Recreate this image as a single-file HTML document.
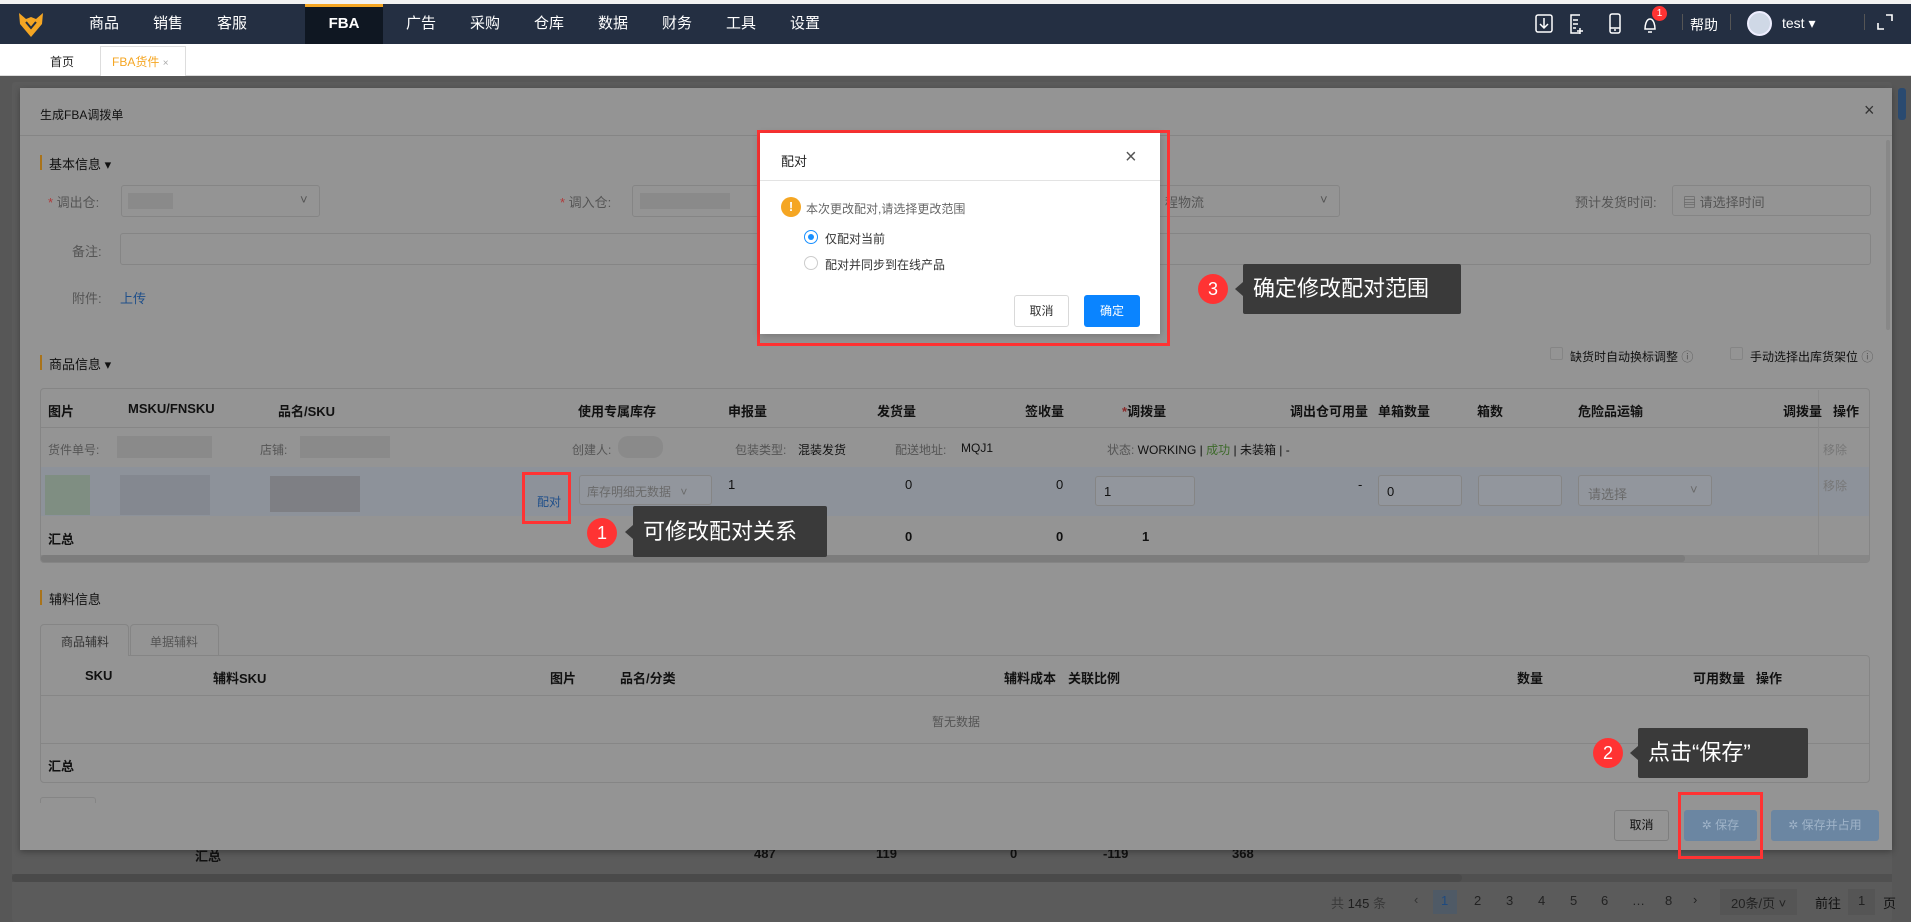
<!DOCTYPE html>
<html><head><meta charset="utf-8"><style>
*{margin:0;padding:0;box-sizing:border-box}
body{width:1911px;height:922px;overflow:hidden;position:relative;background:#575757;font-family:"Liberation Sans","Noto Sans CJK SC",sans-serif;font-size:13px;color:#111}
.a{position:absolute;white-space:nowrap}
.nav{left:0;top:4px;width:1911px;height:40px;background:#242f42}
.ni{top:4px;height:40px;line-height:40px;color:#fff;font-size:15px;width:64px;text-align:center}
.inp{position:absolute;border:1px solid #858585;border-radius:3px;background:#949494}
.th{font-weight:bold;color:#111}
.g{color:#555}
.red{position:absolute;border:3px solid #f33}
.tip{position:absolute;background:#3a3a3a;color:#fff;font-size:22px;border-radius:2px;padding-left:10px}
.cir{position:absolute;width:30px;height:30px;border-radius:50%;background:#f33;color:#fff;text-align:center;line-height:30px;font-size:18px}
.tri{position:absolute;width:0;height:0;border-top:7px solid transparent;border-bottom:7px solid transparent;border-right:8px solid #3a3a3a}
</style></head><body>
<div class="a" style="left:0;top:0;width:1911px;height:4px;background:#f2f2f2"></div>
<div class="a nav"></div>
<svg class="a" style="left:16px;top:10px" width="30" height="30" viewBox="0 0 30 30"><path d="M3 3 L10 9 L15 7 L20 9 L27 3 L26 14 L15 27 L4 14 Z" fill="#f5a623"/><path d="M10 12 L15 18 L20 12" fill="none" stroke="#242f42" stroke-width="2"/></svg>
<div class="a" style="left:305px;top:4px;width:78px;height:40px;background:#0f1722;border-top:3px solid #f5a623"></div>
<div class="a ni" style="left:72px">商品</div><div class="a ni" style="left:136px">销售</div><div class="a ni" style="left:200px">客服</div>
<div class="a ni" style="left:312px;font-weight:bold">FBA</div>
<div class="a ni" style="left:389px">广告</div><div class="a ni" style="left:453px">采购</div><div class="a ni" style="left:517px">仓库</div><div class="a ni" style="left:581px">数据</div><div class="a ni" style="left:645px">财务</div><div class="a ni" style="left:709px">工具</div><div class="a ni" style="left:773px">设置</div>
<svg class="a" style="left:1534px;top:12px" width="130" height="24" viewBox="0 0 130 24" fill="none" stroke="#fff" stroke-width="1.5"><rect x="2" y="3" width="16" height="17" rx="2"/><path d="M10 6v10M6 12l4 4 4-4"/><path d="M46 3h-9v18h9M39 8h5M39 12h5M39 16h3M46 16v6M43 19h6"/><rect x="76" y="2" width="10" height="19" rx="2"/><path d="M76 16h10M80 18h2"/><path d="M111 17c0-3 1-10 5-10s5 7 5 10h-10zM114 20h4"/></svg>
<div class="a" style="left:1652px;top:6px;width:15px;height:15px;border-radius:50%;background:#f33;color:#fff;font-size:10px;text-align:center;line-height:15px">1</div>
<div class="a" style="left:1682px;top:14px;height:16px;border-left:1px solid #555"></div>
<div class="a" style="left:1690px;top:15px;color:#fff;font-size:14px">帮助</div>
<div class="a" style="left:1730px;top:14px;height:16px;border-left:1px solid #555"></div>
<div class="a" style="left:1747px;top:11px;width:25px;height:25px;border-radius:50%;background:#cfd8e6;border:2px solid #eef"></div>
<div class="a" style="left:1782px;top:15px;color:#fff;font-size:14px">test ▾</div>
<div class="a" style="left:1864px;top:14px;height:16px;border-left:1px solid #555"></div>
<svg class="a" style="left:1876px;top:13px" width="18" height="18" fill="none" stroke="#fff" stroke-width="1.6"><path d="M10 2h6v6M2 10v6h6"/></svg>
<!-- tab bar -->
<div class="a" style="left:0;top:44px;width:1911px;height:32px;background:#fff;border-bottom:1px solid #ddd"></div>
<div class="a" style="left:50px;top:53px;font-size:12px;color:#222">首页</div>
<div class="a" style="left:100px;top:46px;width:86px;height:30px;border:1px solid #ddd;border-bottom:none;background:#fff"></div>
<div class="a" style="left:112px;top:53px;font-size:12px;color:#f5a623">FBA货件 <span style="color:#aaa;font-size:10px">×</span></div>
<!-- background page -->
<div class="a" style="left:12px;top:82px;width:1880px;height:840px;background:#5b5b5b;border-radius:3px"></div>
<div class="a" style="left:1898px;top:88px;width:8px;height:32px;background:#2a4a70;border-radius:3px"></div>
<div class="a" style="left:195px;top:846px;font-weight:bold">汇总</div>
<div class="a" style="left:754px;top:846px;font-weight:bold">487</div><div class="a" style="left:876px;top:846px;font-weight:bold">119</div><div class="a" style="left:1010px;top:846px;font-weight:bold">0</div><div class="a" style="left:1103px;top:846px;font-weight:bold">-119</div><div class="a" style="left:1232px;top:846px;font-weight:bold">368</div>
<div class="a" style="left:12px;top:874px;width:1880px;height:8px;background:#505050"></div>
<div class="a" style="left:12px;top:874px;width:1450px;height:8px;background:#4a4a4a;border-radius:4px"></div>
<div class="a" style="left:1433px;top:890px;width:24px;height:24px;background:#4f5a66"></div>
<div class="a" style="left:1331px;top:893px;font-size:13px;color:#1e1e1e"><span style="color:#3a3a3a">共</span> 145 <span style="color:#3a3a3a">条</span></div>
<div class="a" style="left:1414px;top:892px;color:#333">‹</div>
<div class="a" style="left:1441px;top:893px;color:#1e4a80">1</div>
<div class="a" style="left:1474px;top:893px;color:#222">2</div><div class="a" style="left:1506px;top:893px;color:#222">3</div><div class="a" style="left:1538px;top:893px;color:#222">4</div><div class="a" style="left:1570px;top:893px;color:#222">5</div><div class="a" style="left:1601px;top:893px;color:#222">6</div><div class="a" style="left:1632px;top:893px;color:#222">…</div><div class="a" style="left:1665px;top:893px;color:#222">8</div><div class="a" style="left:1693px;top:892px;color:#222">›</div>
<div class="a" style="left:1720px;top:889px;width:77px;height:26px;background:#555"></div>
<div class="a" style="left:1731px;top:893px;color:#222">20条/页 ˅</div>
<div class="a" style="left:1815px;top:893px;color:#111">前往</div>
<div class="a" style="left:1848px;top:889px;width:27px;height:26px;background:#555"></div>
<div class="a" style="left:1858px;top:893px;color:#222">1</div><div class="a" style="left:1883px;top:893px;color:#111">页</div>
<!-- modal -->
<div class="a" style="left:20px;top:88px;width:1872px;height:762px;background:#949494;box-shadow:0 2px 6px rgba(0,0,0,.3)"></div>
<div class="a" style="left:1886px;top:140px;width:4px;height:190px;background:#888;border-radius:2px"></div>
<div class="a" style="left:40px;top:106px;font-size:12px">生成FBA调拨单</div>
<div class="a" style="left:1864px;top:100px;font-size:18px;color:#333">×</div>
<div class="a" style="left:20px;top:135px;width:1872px;border-top:1px solid #858585"></div>
<div class="a" style="left:40px;top:155px;height:15px;border-left:2px solid #a9731a"></div>
<div class="a" style="left:49px;top:154px">基本信息 ▾</div>
<div class="a g" style="left:48px;top:192px"><span style="color:#b13a3a">*</span> 调出仓:</div>
<div class="inp" style="left:121px;top:185px;width:199px;height:32px"></div>
<div class="a" style="left:128px;top:193px;width:45px;height:16px;background:#8a8a8a"></div>
<div class="a g" style="left:300px;top:192px">˅</div>
<div class="a g" style="left:560px;top:192px"><span style="color:#b13a3a">*</span> 调入仓:</div>
<div class="inp" style="left:632px;top:185px;width:708px;height:32px"></div>
<div class="a" style="left:640px;top:193px;width:90px;height:16px;background:#8a8a8a"></div>
<div class="a g" style="left:1165px;top:192px">程物流</div><div class="a g" style="left:1320px;top:192px">˅</div>
<div class="a g" style="left:1575px;top:192px">预计发货时间:</div>
<div class="inp" style="left:1672px;top:185px;width:199px;height:31px"></div>
<div class="a g" style="left:1683px;top:192px">▤ 请选择时间</div>
<div class="a g" style="left:72px;top:241px">备注:</div>
<div class="inp" style="left:120px;top:233px;width:1751px;height:32px"></div>
<div class="a g" style="left:72px;top:288px">附件:</div>
<div class="a" style="left:120px;top:288px;color:#1f4f8a">上传</div>
<!-- goods info -->
<div class="a" style="left:40px;top:355px;height:15px;border-left:2px solid #a9731a"></div>
<div class="a" style="left:49px;top:354px">商品信息 ▾</div>
<div class="a" style="left:1550px;top:347px;width:13px;height:13px;border:1px solid #858585;border-radius:2px"></div>
<div class="a" style="left:1570px;top:348px;font-size:12px">缺货时自动换标调整 <span class="g">ⓘ</span></div>
<div class="a" style="left:1730px;top:347px;width:13px;height:13px;border:1px solid #858585;border-radius:2px"></div>
<div class="a" style="left:1750px;top:348px;font-size:12px">手动选择出库货架位 <span class="g">ⓘ</span></div>
<div class="a" style="left:40px;top:388px;width:1830px;height:175px;border:1px solid #858585;border-radius:4px"></div>
<div class="a" style="left:41px;top:427px;width:1828px;border-top:1px solid #868686"></div>
<div class="a" style="left:41px;top:467px;width:1828px;height:49px;background:#8d929a"></div>
<div class="a" style="left:41px;top:555px;width:1828px;height:7px;background:#878787"></div>
<div class="a" style="left:41px;top:555px;width:1644px;height:7px;background:#7c7c7c;border-radius:3px"></div>
<div class="a" style="left:1818px;top:390px;width:1px;height:165px;background:#8a8a8a"></div>
<div class="a th" style="left:48px;top:401px">图片</div><div class="a th" style="left:128px;top:401px">MSKU/FNSKU</div><div class="a th" style="left:278px;top:401px">品名/SKU</div><div class="a th" style="left:578px;top:401px">使用专属库存</div><div class="a th" style="left:728px;top:401px">申报量</div><div class="a th" style="left:877px;top:401px">发货量</div><div class="a th" style="left:1025px;top:401px">签收量</div><div class="a th" style="left:1122px;top:401px"><span style="color:#8a2a2a">*</span>调拨量</div><div class="a th" style="left:1290px;top:401px">调出仓可用量</div><div class="a th" style="left:1378px;top:401px">单箱数量</div><div class="a th" style="left:1477px;top:401px">箱数</div><div class="a th" style="left:1578px;top:401px">危险品运输</div><div class="a th" style="left:1783px;top:401px">调拨量</div><div class="a th" style="left:1833px;top:401px">操作</div>
<div class="a g" style="left:48px;top:441px;font-size:12px">货件单号:</div><div class="a" style="left:117px;top:436px;width:95px;height:22px;background:#8a8a8a"></div>
<div class="a g" style="left:260px;top:441px;font-size:12px">店铺:</div><div class="a" style="left:300px;top:436px;width:90px;height:22px;background:#8a8a8a"></div>
<div class="a g" style="left:572px;top:441px;font-size:12px">创建人:</div><div class="a" style="left:618px;top:436px;width:45px;height:22px;background:#8a8a8a;border-radius:10px"></div>
<div class="a g" style="left:735px;top:441px;font-size:12px">包装类型:</div><div class="a" style="left:798px;top:441px;font-size:12px">混装发货</div>
<div class="a g" style="left:895px;top:441px;font-size:12px">配送地址:</div><div class="a" style="left:961px;top:441px;font-size:12px">MQJ1</div>
<div class="a" style="left:1107px;top:441px;font-size:12px"><span class="g">状态:</span> WORKING | <span style="color:#3d6a2a">成功</span> | 未装箱 | -</div>
<div class="a" style="left:1823px;top:441px;font-size:12px;color:#777">移除</div>
<div class="a" style="left:45px;top:475px;width:45px;height:40px;background:#7f8e82"></div>
<div class="a" style="left:120px;top:475px;width:90px;height:40px;background:#848890"></div>
<div class="a" style="left:270px;top:476px;width:90px;height:36px;background:#7e7f84"></div>
<div class="a" style="left:537px;top:493px;font-size:12px;color:#1f4f8a">配对</div>
<div class="inp" style="left:579px;top:475px;width:133px;height:30px;background:#92969d"></div>
<div class="a" style="left:587px;top:483px;font-size:12px;color:#6a6a6a">库存明细无数据 <span style="margin-left:6px">˅</span></div>
<div class="a" style="left:728px;top:477px">1</div><div class="a" style="left:905px;top:477px">0</div><div class="a" style="left:1056px;top:477px">0</div>
<div class="inp" style="left:1095px;top:476px;width:100px;height:30px;background:#92969d"></div><div class="a" style="left:1104px;top:484px">1</div>
<div class="a" style="left:1358px;top:477px">-</div>
<div class="inp" style="left:1378px;top:475px;width:84px;height:31px;background:#92969d"></div><div class="a" style="left:1387px;top:484px">0</div>
<div class="inp" style="left:1478px;top:475px;width:84px;height:31px;background:#92969d"></div>
<div class="inp" style="left:1578px;top:475px;width:134px;height:31px;background:#92969d"></div><div class="a" style="left:1588px;top:484px;color:#6a6a6a">请选择</div><div class="a" style="left:1690px;top:482px;color:#6a6a6a">˅</div>
<div class="a" style="left:1823px;top:477px;font-size:12px;color:#777">移除</div>
<div class="a th" style="left:48px;top:529px">汇总</div><div class="a th" style="left:905px;top:529px">0</div><div class="a th" style="left:1056px;top:529px">0</div><div class="a th" style="left:1142px;top:529px">1</div>
<!-- 辅料 -->
<div class="a" style="left:40px;top:590px;height:15px;border-left:2px solid #a9731a"></div>
<div class="a" style="left:49px;top:589px">辅料信息</div>
<div class="a" style="left:40px;top:624px;width:89px;height:32px;border:1px solid #858585;border-bottom:none;border-radius:4px 4px 0 0;background:#949494;z-index:2"></div>
<div class="a g" style="left:61px;top:633px;font-size:12px;z-index:3;color:#333">商品辅料</div>
<div class="a" style="left:130px;top:624px;width:89px;height:31px;border:1px solid #858585;border-bottom:none;border-radius:4px 4px 0 0"></div>
<div class="a g" style="left:150px;top:633px;font-size:12px">单据辅料</div>
<div class="a" style="left:40px;top:655px;width:1830px;height:128px;border:1px solid #858585;border-radius:0 4px 4px 4px"></div>
<div class="a" style="left:41px;top:695px;width:1828px;border-top:1px solid #868686"></div>
<div class="a" style="left:41px;top:743px;width:1828px;border-top:1px solid #868686"></div>
<div class="a th" style="left:85px;top:668px">SKU</div><div class="a th" style="left:213px;top:668px">辅料SKU</div><div class="a th" style="left:550px;top:668px">图片</div><div class="a th" style="left:620px;top:668px">品名/分类</div><div class="a th" style="left:1004px;top:668px">辅料成本</div><div class="a th" style="left:1068px;top:668px">关联比例</div><div class="a th" style="left:1517px;top:668px">数量</div><div class="a th" style="left:1693px;top:668px">可用数量</div><div class="a th" style="left:1756px;top:668px">操作</div>
<div class="a g" style="left:932px;top:713px;font-size:12px">暂无数据</div>
<div class="a th" style="left:48px;top:756px">汇总</div>
<div class="a" style="left:40px;top:797px;width:56px;height:6px;border:1px solid #858585;border-bottom:none;border-radius:3px 3px 0 0"></div>
<!-- footer buttons -->
<div class="a" style="left:1614px;top:810px;width:55px;height:31px;border:1px solid #7e7e7e;border-radius:3px;text-align:center;line-height:29px;font-size:12px">取消</div>
<div class="a" style="left:1684px;top:810px;width:73px;height:31px;background:#6b86a2;border-radius:3px;text-align:center;line-height:31px;font-size:12px;color:#9fb3c8">✲ 保存</div>
<div class="a" style="left:1771px;top:810px;width:108px;height:31px;background:#6b86a2;border-radius:3px;text-align:center;line-height:31px;font-size:12px;color:#9fb3c8">✲ 保存并占用</div>
<div class="red" style="left:1678px;top:792px;width:85px;height:67px"></div>
<!-- annotations -->
<div class="red" style="left:522px;top:472px;width:49px;height:52px"></div>
<div class="cir" style="left:587px;top:518px">1</div><div class="tri" style="left:625px;top:525px"></div>
<div class="tip" style="left:633px;top:506px;width:194px;height:51px;line-height:51px">可修改配对关系</div>
<div class="cir" style="left:1593px;top:738px">2</div><div class="tri" style="left:1630px;top:746px"></div>
<div class="tip" style="left:1638px;top:728px;width:170px;height:50px;line-height:50px">点击“保存”</div>
<div class="cir" style="left:1198px;top:274px">3</div><div class="tri" style="left:1235px;top:282px"></div>
<div class="tip" style="left:1243px;top:264px;width:218px;height:50px;line-height:50px">确定修改配对范围</div>
<!-- dialog -->
<div class="red" style="left:757px;top:130px;width:413px;height:216px"></div>
<div class="a" style="left:760px;top:133px;width:400px;height:201px;background:#fff;box-shadow:0 2px 8px rgba(0,0,0,.2)"></div>
<div class="a" style="left:781px;top:151px;font-size:13px;color:#222">配对</div>
<div class="a" style="left:1125px;top:146px;font-size:20px;color:#555;font-weight:lighter">×</div>
<div class="a" style="left:760px;top:180px;width:400px;border-top:1px solid #e3e3e3"></div>
<div class="a" style="left:781px;top:197px;width:20px;height:20px;border-radius:50%;background:#f5a623;color:#fff;text-align:center;line-height:20px;font-weight:bold;font-size:13px">!</div>
<div class="a" style="left:806px;top:200px;font-size:12px;color:#666">本次更改配对,请选择更改范围</div>
<div class="a" style="left:804px;top:230px;width:14px;height:14px;border-radius:50%;border:1px solid #1890ff"></div>
<div class="a" style="left:808px;top:234px;width:6px;height:6px;border-radius:50%;background:#1890ff"></div>
<div class="a" style="left:825px;top:230px;font-size:12px;color:#333">仅配对当前</div>
<div class="a" style="left:804px;top:256px;width:14px;height:14px;border-radius:50%;border:1px solid #ccc"></div>
<div class="a" style="left:825px;top:256px;font-size:12px;color:#333">配对并同步到在线产品</div>
<div class="a" style="left:1014px;top:295px;width:55px;height:32px;border:1px solid #d9d9d9;border-radius:3px;text-align:center;line-height:30px;font-size:12px;color:#333">取消</div>
<div class="a" style="left:1084px;top:295px;width:56px;height:32px;background:#0a84ff;border-radius:3px;text-align:center;line-height:32px;font-size:12px;color:#fff">确定</div>
</body></html>
